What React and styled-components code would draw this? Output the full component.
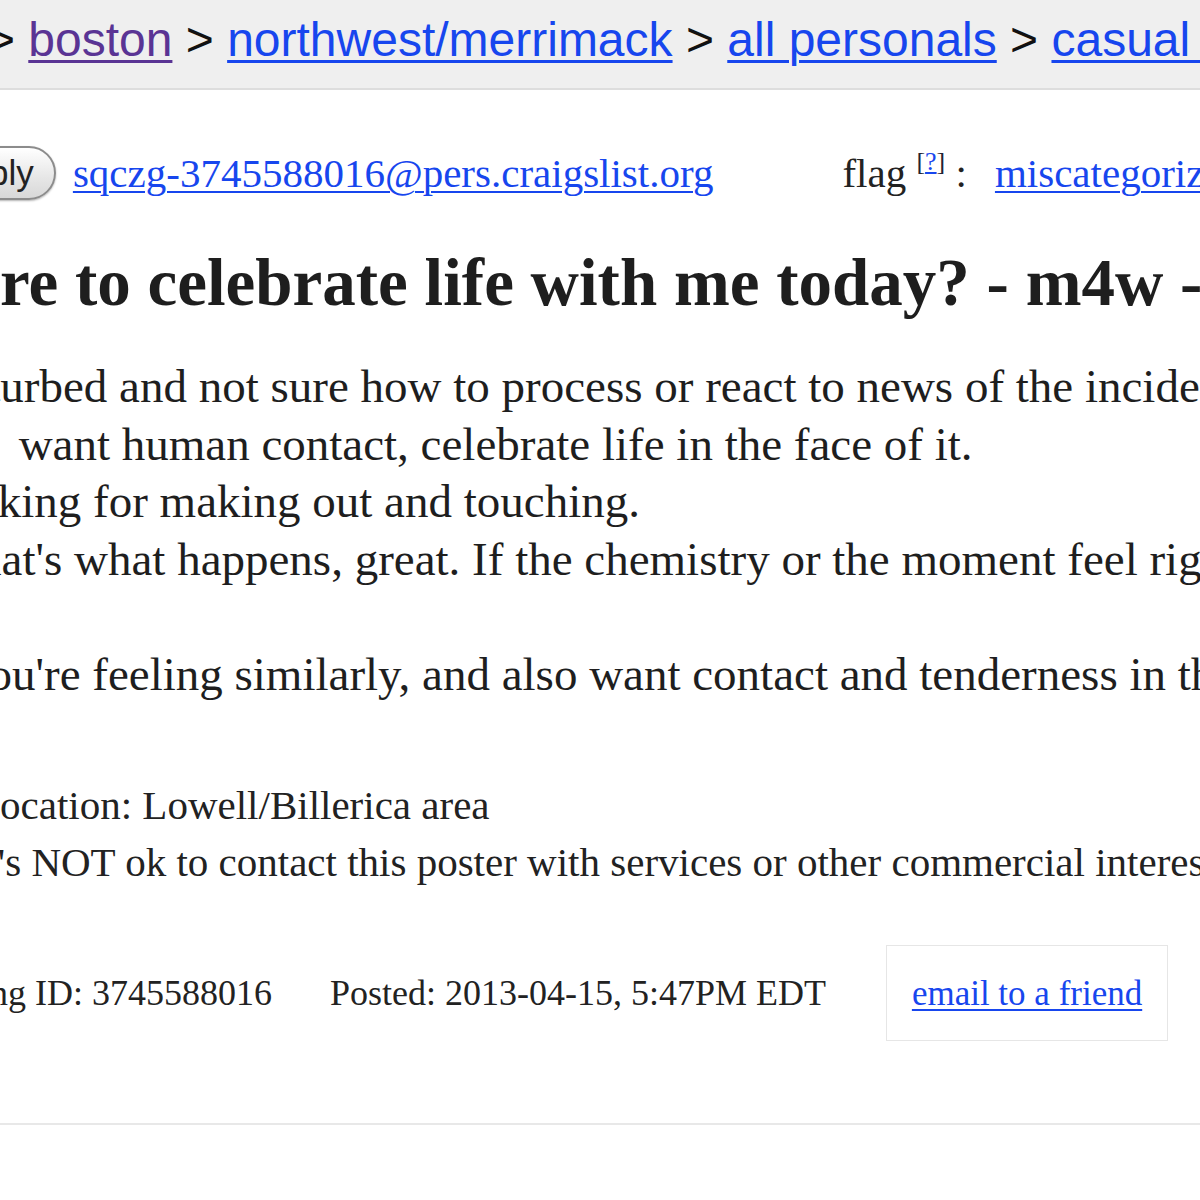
import React from "react";
import styled, { createGlobalStyle } from "styled-components";

const GlobalStyle = createGlobalStyle`
  html, body {
    margin: 0;
    padding: 0;
    background: #ffffff;
    overflow: hidden;
  }
`;

const Viewport = styled.div`
  width: 1200px;
  height: 1200px;
  overflow: hidden;
  background: #ffffff;
`;

const Page = styled.div`
  width: 1800px;
  margin-left: -90px;
  font-family: "Liberation Serif", "Times New Roman", serif;
  color: #222;
  white-space: nowrap;
`;

const TopBar = styled.header`
  height: 88px;
  background: #efefef;
  border-bottom: 2px solid #dddddd;
  padding-left: 4px;
  font-family: "Liberation Sans", Arial, sans-serif;
  font-size: 48px;
  line-height: 80px;
  color: #111;
`;

const Crumb = styled.a`
  color: ${(p) => (p.$visited ? "#5a3494" : "#1746ee")};
  text-decoration: underline;
  text-decoration-thickness: 3px;
  text-underline-offset: 4px;
`;

const ReplyRow = styled.div`
  display: flex;
  align-items: center;
  height: 56px;
  margin-top: 55px;
  padding-left: 26px;
  font-size: 41px;
`;

const ReplyButton = styled.button`
  height: 54px;
  padding: 0 20px 0 20px;
  border-radius: 27px;
  border: 2px solid #8c8c8c;
  background: linear-gradient(#ffffff, #e6e6e6 60%, #d8d8d8);
  box-shadow: 0 1px 2px rgba(0, 0, 0, 0.3);
  font-family: "Liberation Sans", Arial, sans-serif;
  font-size: 35px;
  color: #222;
`;

const Link = styled.a`
  color: #1746ee;
  text-decoration: underline;
  text-decoration-thickness: 2px;
  text-underline-offset: 4px;
`;

const EmailLink = styled(Link)`
  margin-left: 17px;
`;

const Flag = styled.span`
  margin-left: 129px;
  color: #222;
`;

const FlagHelp = styled.sup`
  font-size: 26px;
  vertical-align: 17px;
  line-height: 0;
  color: #223;
`;

const HelpLink = styled.a`
  color: #1746ee;
  text-decoration: underline;
`;

const FlagOption = styled(Link)`
  margin-left: 28px;
`;

const Title = styled.h2`
  margin: 41px 0 0;
  padding-left: 8px;
  font-size: 67px;
  line-height: 80px;
  font-weight: bold;
  color: #1e1e1e;
`;

const Body = styled.section`
  margin-top: 36px;
  padding-left: 12px;
  font-size: 47px;
  line-height: 57.5px;
  color: #1e1e1e;
`;

const BodyLine = styled.div`
  min-height: 57.5px;
`;

const Blurbs = styled.ul`
  margin: 74px 0 0;
  padding-left: 65px;
  font-size: 41px;
  line-height: 57px;
  color: #222;
`;

const Footer = styled.div`
  display: flex;
  align-items: center;
  margin-top: 54px;
  padding-left: 8px;
  font-size: 36px;
  color: #222;
`;

const Posted = styled.span`
  margin-left: 58px;
`;

const ShareBox = styled.div`
  margin-left: 60px;
  width: 280px;
  padding: 26px 0;
  border: 1px solid #e6e6e6;
  text-align: center;
`;

const ShareLink = styled.a`
  color: #1746ee;
  text-decoration: underline;
  text-decoration-thickness: 2px;
  text-underline-offset: 4px;
  font-size: 35px;
`;

const Rule = styled.hr`
  margin: 82px 0 0;
  border: 0;
  border-top: 2px solid #e8e8e8;
  height: 0;
`;

const lines = [
  "Disturbed and not sure how to process or react to news of the incident today.",
  "Just\u00a0\u00a0want human contact, celebrate life in the face of it.",
  "Looking for making out and touching.",
  "If that's what happens, great. If the chemistry or the moment feel right, even better.",
  "",
  "If you're feeling similarly, and also want contact and tenderness in this strange time, write me.",
];

export default function App() {
  return (
    <>
      <GlobalStyle />
      <Viewport>
        <Page>
          <TopBar>
            <Crumb href="#">CL</Crumb> &gt; <Crumb $visited href="#">boston</Crumb> &gt;{" "}
            <Crumb href="#">northwest/merrimack</Crumb> &gt; <Crumb href="#">all personals</Crumb> &gt;{" "}
            <Crumb href="#">casual encounters</Crumb>
          </TopBar>

          <ReplyRow>
            <ReplyButton type="button">reply</ReplyButton>
            <EmailLink href="#">sqczg-3745588016@pers.craigslist.org</EmailLink>
            <Flag>
              flag{" "}
              <FlagHelp>
                [<HelpLink href="#">?</HelpLink>]
              </FlagHelp>{" "}
              :
            </Flag>
            <FlagOption href="#">miscategorized</FlagOption>
          </ReplyRow>

          <Title>Care to celebrate life with me today? - m4w - 35 (Lowell)</Title>

          <Body>
            {lines.map((l, i) => (
              <BodyLine key={i}>{l}</BodyLine>
            ))}
          </Body>

          <Blurbs>
            <li>Location: Lowell/Billerica area</li>
            <li>it's NOT ok to contact this poster with services or other commercial interests</li>
          </Blurbs>

          <Footer>
            <span>Posting ID: 3745588016</span>
            <Posted>Posted: 2013-04-15, 5:47PM EDT</Posted>
            <ShareBox>
              <ShareLink href="#">email to a friend</ShareLink>
            </ShareBox>
          </Footer>

          <Rule />
        </Page>
      </Viewport>
    </>
  );
}
